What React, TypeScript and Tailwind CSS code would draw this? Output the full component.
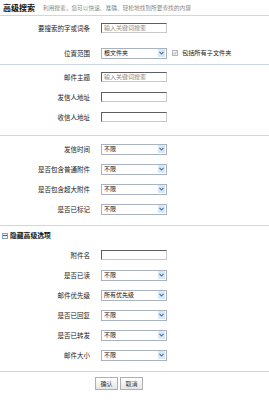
import type { ReactNode } from 'react';

const font = { fontFamily: '"Noto Sans CJK SC", "Noto Sans", sans-serif' };

const Row = ({ label, children }: { label: string; children: ReactNode }) => (
  <div className="flex h-[20px] items-center">
    <div className="w-[90px] text-right text-[6.5px] leading-none text-[#222]">{label}</div>
    <div className="ml-[11px] flex items-center">{children}</div>
  </div>
);

const TextBox = ({ hint }: { hint?: string }) => (
  <div className="flex h-[10px] w-[66px] items-center border border-[#5f5f5f] border-b-[#c8c8c8] border-r-[#c8c8c8] bg-white pl-[2px] text-[6px] leading-none text-[#888]">
    {hint}
  </div>
);

const Select = ({ value = '不限' }: { value?: string }) => (
  <div className="flex h-[11px] w-[66px] items-center justify-between border border-[#a9b3bf] bg-white pl-[2px] pr-[1px]">
    <span className="text-[6px] leading-none text-[#111]">{value}</span>
    <span className="flex h-[8px] w-[7px] items-center justify-center bg-[#dce7f4]">
      <svg width="5" height="4" viewBox="0 0 5 4">
        <path d="M0.5 0.8 L2.5 3 L4.5 0.8" fill="none" stroke="#3d6fb6" strokeWidth="1.1" />
      </svg>
    </span>
  </div>
);

const Line = () => <div className="h-px bg-[#cbd8e4]" />;

export default function App() {
  return (
    <div className="h-[407px] w-[269px] bg-white" style={font}>
      {/* Header */}
      <div className="flex h-[15px] items-center pl-[3px]">
        <span className="text-[8px] font-bold leading-none text-[#111]">高级搜索</span>
        <span className="ml-[8px] text-[5.7px] leading-none text-[#888]">
          利用搜索，您可以快速、准确、轻松地找到所要查找的内容
        </span>
      </div>
      <Line />

      <div className="pt-[2px] pb-[1px]">
        <Row label="要搜索的字或词条">
          <TextBox hint="输入关键词搜索" />
        </Row>
        <div className="h-[5px]" />
        <Row label="位置范围">
          <Select value="根文件夹" />
          <span className="ml-[5px] flex h-[6px] w-[6px] items-center justify-center border border-[#b5b5b5] bg-[#f4f4f4]">
            <svg width="4" height="4" viewBox="0 0 4 4">
              <path d="M0.5 2 L1.6 3.2 L3.6 0.6" fill="none" stroke="#9a9a9a" strokeWidth="0.8" />
            </svg>
          </span>
          <span className="ml-[4px] text-[6.2px] leading-none text-[#222]">包括所有子文件夹</span>
        </Row>
      </div>
      <Line />

      <div className="pt-[2px] pb-[8px]">
        <Row label="邮件主题">
          <TextBox hint="输入关键词搜索" />
        </Row>
        <Row label="发信人地址">
          <TextBox />
        </Row>
        <Row label="收信人地址">
          <TextBox />
        </Row>
      </div>
      <Line />

      <div className="pt-[3px] pb-[6px]">
        <Row label="发信时间">
          <Select />
        </Row>
        <Row label="是否包含普通附件">
          <Select />
        </Row>
        <Row label="是否包含超大附件">
          <Select />
        </Row>
        <Row label="是否已标记">
          <Select />
        </Row>
      </div>
      <Line />

      <div className="flex h-[19px] items-center pl-[2px]">
        <span className="flex h-[6px] w-[6px] items-center justify-center border border-[#8aa0bb] bg-[#eef3f9]">
          <span className="h-px w-[4px] bg-[#3d5f8f]" />
        </span>
        <span className="ml-[2px] text-[6.8px] font-bold leading-none text-[#111]">隐藏高级选项</span>
      </div>

      <div className="pb-[6px]">
        <Row label="附件名">
          <TextBox />
        </Row>
        <Row label="是否已读">
          <Select />
        </Row>
        <Row label="邮件优先级">
          <Select value="所有优先级" />
        </Row>
        <Row label="是否已回复">
          <Select />
        </Row>
        <Row label="是否已转发">
          <Select />
        </Row>
        <Row label="邮件大小">
          <Select />
        </Row>
      </div>
      <div className="h-px bg-[#d4d4d4]" />

      <div className="flex gap-[2px] pl-[95px] pt-[5px]">
        <button className="h-[13px] w-[23px] border border-[#b0b0b0] bg-gradient-to-b from-white to-[#e6e6e6] text-[6px] leading-none text-[#333]">
          确认
        </button>
        <button className="h-[13px] w-[23px] border border-[#b0b0b0] bg-gradient-to-b from-white to-[#e6e6e6] text-[6px] leading-none text-[#333]">
          取消
        </button>
      </div>
    </div>
  );
}
